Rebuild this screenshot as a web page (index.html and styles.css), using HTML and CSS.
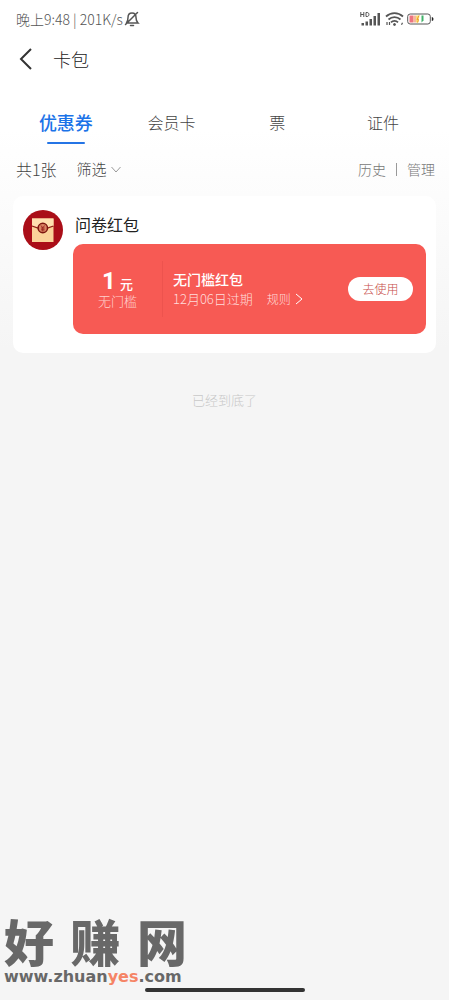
FILE: index.html
```html
<!DOCTYPE html>
<html lang="zh-CN">
<head>
<meta charset="utf-8">
<meta name="viewport" content="width=device-width, initial-scale=1">
<title>卡包</title>
<link rel="stylesheet" href="styles.css">
</head>
<body>
<div class="status">
  <span class="status-text">晚上9:48 | 201K/s</span>
  <svg class="bell" width="16" height="16" viewBox="0 0 16 16" fill="none" stroke="#555" stroke-width="1.5" stroke-linecap="round"><path d="M2.500 12h11.500c-1.500-1.500-2-3-2-5.500C12 3.500 10.500 2 8 2S4 3.500 4 6.500c0 2.500-.5 4-1.500 5.500M6.500 14.500h3M1.500 13.500L13.500 1.500"/></svg>
  <svg class="signal" width="21" height="16" viewBox="0 0 21 16" fill="#555"><g fill="none" stroke="#555"><path d="M.8 1v5M.8 3.500h3M3.800 1v5M6 1.500v4h1.200c2.300 0 2.300-4 0-4z"/></g><path d="M1.500 12h2.500v2.500H1.500zM5.500 10.500H8v4H5.500zM9.500 8H12v6.500H9.500zM13.500 5H16v9.500h-2.500zM17.500 2H20v12.500h-2.500z"/></svg>
  <svg class="wifi" width="19" height="16" viewBox="0 0 19 16" fill="none" stroke="#555" stroke-width="1.800"><path d="M1 5.500c5-4.600 12-4.600 17 0M3.500 8.500c3.500-3.200 8.500-3.200 12 0M6 11.300c2-2 5-2 7 0"/><circle cx="9.500" cy="13.500" r="1" fill="#555" stroke-width="1"/><path d="M2 11v3M4.500 11v3M16.500 13.800l1-2" stroke-width="1.200"/></svg>
  <svg class="battery" width="27" height="12" viewBox="0 0 27 12"><rect x=".7" y="1" width="22.600" height="10" rx="2.500" fill="#fff" stroke="#555" stroke-width="1"/><path d="M2.500 2.500H6v7H2.500z" fill="#ee7480"/><path d="M6 2.500h3v7H6z" fill="#f6b6a0"/><path d="M9 2.500h3.500l-1 7H9z" fill="#f7df75"/><path d="M12 2.500l-2 4h1.500l-1 3" stroke="#ee9c31" fill="none"/><path d="M14.500 2.500h2v5l-2 2z" fill="#40b36a"/><path d="M24.800 4c2.200 0 2.200 4 0 4z" fill="#222"/></svg>
</div>
<header class="header">
  <button class="back" aria-label="返回"><svg width="14" height="22" viewBox="0 0 14 22" fill="none" stroke="#333" stroke-width="2"><path d="M12 1L2 11l10 10"/></svg></button>
  <h1 class="title">卡包</h1>
</header>
<nav class="tabs">
  <a class="tab active" href="#coupon">优惠券</a>
  <a class="tab" href="#member">会员卡</a>
  <a class="tab" href="#ticket">票</a>
  <a class="tab" href="#id">证件</a>
</nav>
<div class="tools">
  <span>共1张</span>
  <button class="filter">筛选<svg width="10" height="7" viewBox="0 0 10 7" fill="none" stroke="#999"><path d="M.5 1L5 6l4.500-5"/></svg></button>
  <div class="links"><a href="#history">历史</a><i class="bar"></i><a href="#manage">管理</a></div>
</div>
<main class="card" id="coupon">
  <svg class="avatar" width="40" height="40" viewBox="0 0 40 40"><circle cx="20" cy="20" r="20" fill="#aa0e18"/><path d="M9 8.500h21.500v23.500H9z" fill="#fbd39a"/><path d="M9 8.500h21.500V16l-10.700 3L9 16z" fill="#ffe0b0"/><path d="M9 16q10.700 5 21.500 0" fill="none" stroke="#8f2016" stroke-width="1.200"/><circle cx="19.800" cy="18" r="4.700" fill="#d98262" stroke="#7d160f" stroke-width="1.500"/><path d="M18 15.500l1.800 2.300 1.800-2.300M19.800 18v3.500M18 18h3.600M18 19.800h3.600" fill="none" stroke="#8f1612" stroke-width=".8"/></svg>
  <div class="content">
    <h2 class="name">问卷红包</h2>
    <section class="coupon">
      <div class="value">
        <div class="amount"><strong>1</strong><b>元</b></div>
        <div class="limit">无门槛</div>
      </div>
      <div class="detail">
        <h3 class="coupon-name">无门槛红包</h3>
        <div class="meta"><span>12月06日过期</span><a class="rules" href="#rules">规则<svg width="8" height="12" viewBox="0 0 8 12" fill="none" stroke="#fff" stroke-width="1"><path d="M1 1l6 5-6 5"/></svg></a></div>
      </div>
      <button class="use">去使用</button>
    </section>
  </div>
</main>
<p class="end">已经到底了</p>
<div class="home"></div>
<div class="mark">
  <div class="mark-name"><span>好</span><span>赚</span><span>网</span></div>
  <div class="mark-url">www.zhuan<em>yes</em>.com</div>
</div>
</body>
</html>
```
FILE: styles.css
```css
* { box-sizing: border-box; }
body {
  margin: 0;
  min-height: 100vh;
  display: flex;
  flex-direction: column;
  position: relative;
  font-family: "Noto Sans CJK SC", sans-serif;
  font-weight: 300;
  color: #444;
  background: #f5f5f5 linear-gradient(#fff 130px, #f5f5f5 350px) no-repeat;
}
h1, h2, h3, p { margin: 0; }
a { color: inherit; text-decoration: none; }
button { margin: 0; padding: 0; border: 0; background: none; font: inherit; color: inherit; }
svg { display: block; flex: none; }
.status {
  display: flex;
  align-items: center;
  height: 38px;
  padding: 0 15px 0 16px;
  font-size: 14px;
  color: #555;
}
.bell { margin-left: 1px; }
.signal { margin-left: auto; }
.wifi { margin: 0 3px 0 4px; }
.header { display: flex; align-items: center; height: 42px; padding: 0 19px; }
.title { margin-left: 20px; font-size: 18px; line-height: 24px; font-weight: 300; color: #222; }
.tabs { display: grid; grid-template-columns: repeat(4, 1fr); margin-top: 28px; padding: 0 13px; }
.tab {
  display: flex;
  flex-direction: column;
  align-items: center;
  height: 36px;
  font-size: 16px;
  line-height: 28px;
}
.active { font-size: 18px; font-weight: 500; color: #1b73e8; }
.active::after { content: ""; width: 38px; height: 2px; margin-top: 6px; border-radius: 1px; background: #2474e5; }
.tools { display: flex; align-items: center; height: 24px; margin-top: 13px; padding: 0 14px 0 16px; font-size: 16px; line-height: 24px; }
.filter { display: flex; align-items: center; gap: 4px; margin-left: 20px; font-size: 15px; }
.links { display: flex; align-items: center; gap: 10px; margin-left: auto; font-size: 14px; color: #777; }
.bar { width: 1px; height: 13px; background: #999; }
.card { display: flex; gap: 10px; margin: 15px 13px 0; padding: 14px 10px 19px; border-radius: 10px; background: #fff; }
.content { flex: 1; min-width: 0; }
.name { padding-left: 2px; font-size: 16px; line-height: 28px; font-weight: 400; color: #222; }
.coupon { display: flex; align-items: center; height: 90px; margin-top: 6px; padding-right: 13px; border-radius: 10px; background: #f75a54; color: #fff; }
.value { width: 90px; height: 56px; padding-top: 8px; border-right: 1px solid #ed534e; text-align: center; }
.amount { display: flex; justify-content: center; align-items: baseline; gap: 4px; height: 23px; line-height: 24px; }
.amount strong { font-family: Roboto, sans-serif; font-size: 24px; font-weight: 700; }
.amount b { font-size: 13px; font-weight: 500; }
.limit { font-size: 13px; line-height: 18px; color: #ffd0cd; }
.detail { flex: 1; padding-left: 10px; white-space: nowrap; }
.coupon-name { font-size: 14px; line-height: 20px; font-weight: 500; }
.meta { display: flex; align-items: center; gap: 14px; font-size: 13px; line-height: 20px; color: #ffdddb; }
.rules { display: flex; align-items: center; gap: 4px; font-size: 12px; }
.use { width: 65px; height: 24px; border-radius: 12px; background: #fff; color: #c74d48; font-size: 12px; line-height: 24px; }
.end { margin-top: 37px; font-size: 13px; line-height: 20px; text-align: center; color: #c8c8c8; }
.home { width: 160px; height: 4px; margin: auto auto 8px; border-radius: 2px; background: #333; }
.mark { position: absolute; left: 4px; bottom: 15px; width: 183px; color: #686868; }
.mark-name { display: flex; justify-content: space-between; padding-bottom: 4px; font-size: 50px; line-height: 50px; font-weight: 900; }
.mark-url { font-family: "DejaVu Sans", sans-serif; font-size: 16px; line-height: 16px; font-weight: 700; }
.mark-url em { font-style: normal; color: #f58465; }
```
